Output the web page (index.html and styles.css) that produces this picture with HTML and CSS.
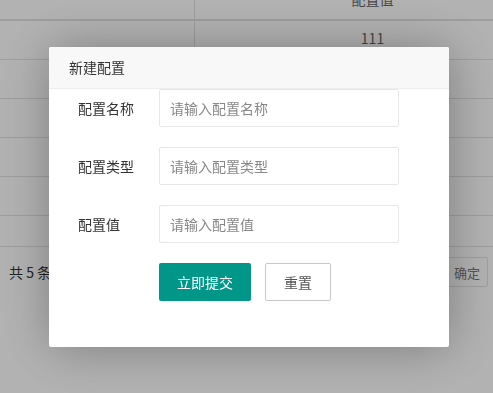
FILE: index.html
```html
<!DOCTYPE html>
<html lang="zh-CN">
<head>
    <meta charset="UTF-8">
    <meta name="viewport" content="width=device-width, initial-scale=1.0">
    <title>配置管理</title>
    <link rel="stylesheet" href="styles.css">
</head>
<body>
    <div class="page">
        <!-- 配置列表 -->
        <div class="table">
            <div class="row head">
                <div class="cell first"></div>
                <div class="cell">配置值</div>
            </div>
            <div class="row">
                <div class="cell first"></div>
                <div class="cell">111</div>
            </div>
            <div class="row">
                <div class="cell first"></div>
                <div class="cell"></div>
            </div>
            <div class="row">
                <div class="cell first"></div>
                <div class="cell"></div>
            </div>
            <div class="row">
                <div class="cell first"></div>
                <div class="cell"></div>
            </div>
            <div class="row">
                <div class="cell first"></div>
                <div class="cell"></div>
            </div>
            <div class="table-foot"></div>
        </div>

        <div class="pager">
            <span class="count">共 5 条</span>
            <button class="pager-btn">确定</button>
        </div>
    </div>

    <div class="shade"></div>

    <!-- 新建配置弹层 -->
    <div class="layer">
        <div class="layer-title">新建配置</div>
        <form class="layer-form">
            <div class="form-item">
                <label class="form-label" for="name">配置名称</label>
                <input class="form-input" type="text" id="name" placeholder="请输入配置名称">
            </div>
            <div class="form-item">
                <label class="form-label" for="type">配置类型</label>
                <input class="form-input" type="text" id="type" placeholder="请输入配置类型">
            </div>
            <div class="form-item">
                <label class="form-label" for="value">配置值</label>
                <input class="form-input" type="text" id="value" placeholder="请输入配置值">
            </div>
            <div class="form-actions">
                <button type="submit" class="btn btn-primary">立即提交</button>
                <button type="reset" class="btn btn-plain">重置</button>
            </div>
        </form>
    </div>
</body>
</html>
```

FILE: styles.css
```css
body {
    margin: 0;
    overflow: hidden;
    font-family: "Noto Sans CJK SC", "Liberation Sans", sans-serif;
    font-size: 14px;
    color: #333;
    background-color: #fff;
}
.page {
    width: 550px;
}
.table {
    margin-top: -18px;
}
.row {
    display: flex;
    height: 38px;
    border-bottom: 1px solid #e2e2e2;
}
.row.head {
    height: 37px;
    border-bottom-width: 2px;
}
.cell {
    flex: 1;
    display: flex;
    align-items: center;
    justify-content: center;
    padding-bottom: 4px;
    color: #666;
}
.cell.first {
    flex: 0 0 194px;
    border-right: 1px solid #e2e2e2;
}
.table-foot {
    height: 30px;
    border-bottom: 1px solid #e2e2e2;
}
.pager {
    width: 493px;
    box-sizing: border-box;
    display: flex;
    align-items: center;
    justify-content: space-between;
    padding: 10px 5px 0 9px;
}
.count {
    color: #333;
}
.pager-btn {
    height: 30px;
    padding: 0 7px;
    border: 1px solid #e2e2e2;
    border-radius: 2px;
    background-color: #fff;
    color: #777;
    font-family: inherit;
    font-size: 13px;
}
.shade {
    position: fixed;
    inset: 0;
    background-color: rgba(0,0,0,0.3);
}
.layer {
    position: fixed;
    left: 49px;
    top: 47px;
    width: 400px;
    height: 300px;
    background-color: #fff;
    border-radius: 2px;
    box-shadow: 1px 1px 50px rgba(0,0,0,0.3);
}
.layer-title {
    height: 41px;
    line-height: 41px;
    padding: 0 20px;
    background-color: #f8f8f8;
    border-bottom: 1px solid #eee;
    border-radius: 2px 2px 0 0;
    color: #333;
}
.form-item {
    display: flex;
    align-items: center;
    margin-bottom: 20px;
}
.form-label {
    width: 110px;
    box-sizing: border-box;
    padding-left: 29px;
    color: #333;
}
.form-input {
    width: 240px;
    height: 38px;
    box-sizing: border-box;
    padding-left: 10px;
    border: 1px solid #e6e6e6;
    border-radius: 2px;
    font-family: inherit;
    font-size: 14px;
    color: #333;
    outline: none;
}
.form-input::placeholder {
    color: #888;
}
.form-actions {
    display: flex;
    gap: 14px;
    padding-left: 110px;
}
.btn {
    height: 38px;
    padding: 0 18px;
    border-radius: 2px;
    font-family: inherit;
    font-size: 14px;
    cursor: pointer;
}
.btn-primary {
    border: none;
    background-color: #009688;
    color: #fff;
}
.btn-plain {
    border: 1px solid #c9c9c9;
    background-color: #fff;
    color: #555;
}
```
